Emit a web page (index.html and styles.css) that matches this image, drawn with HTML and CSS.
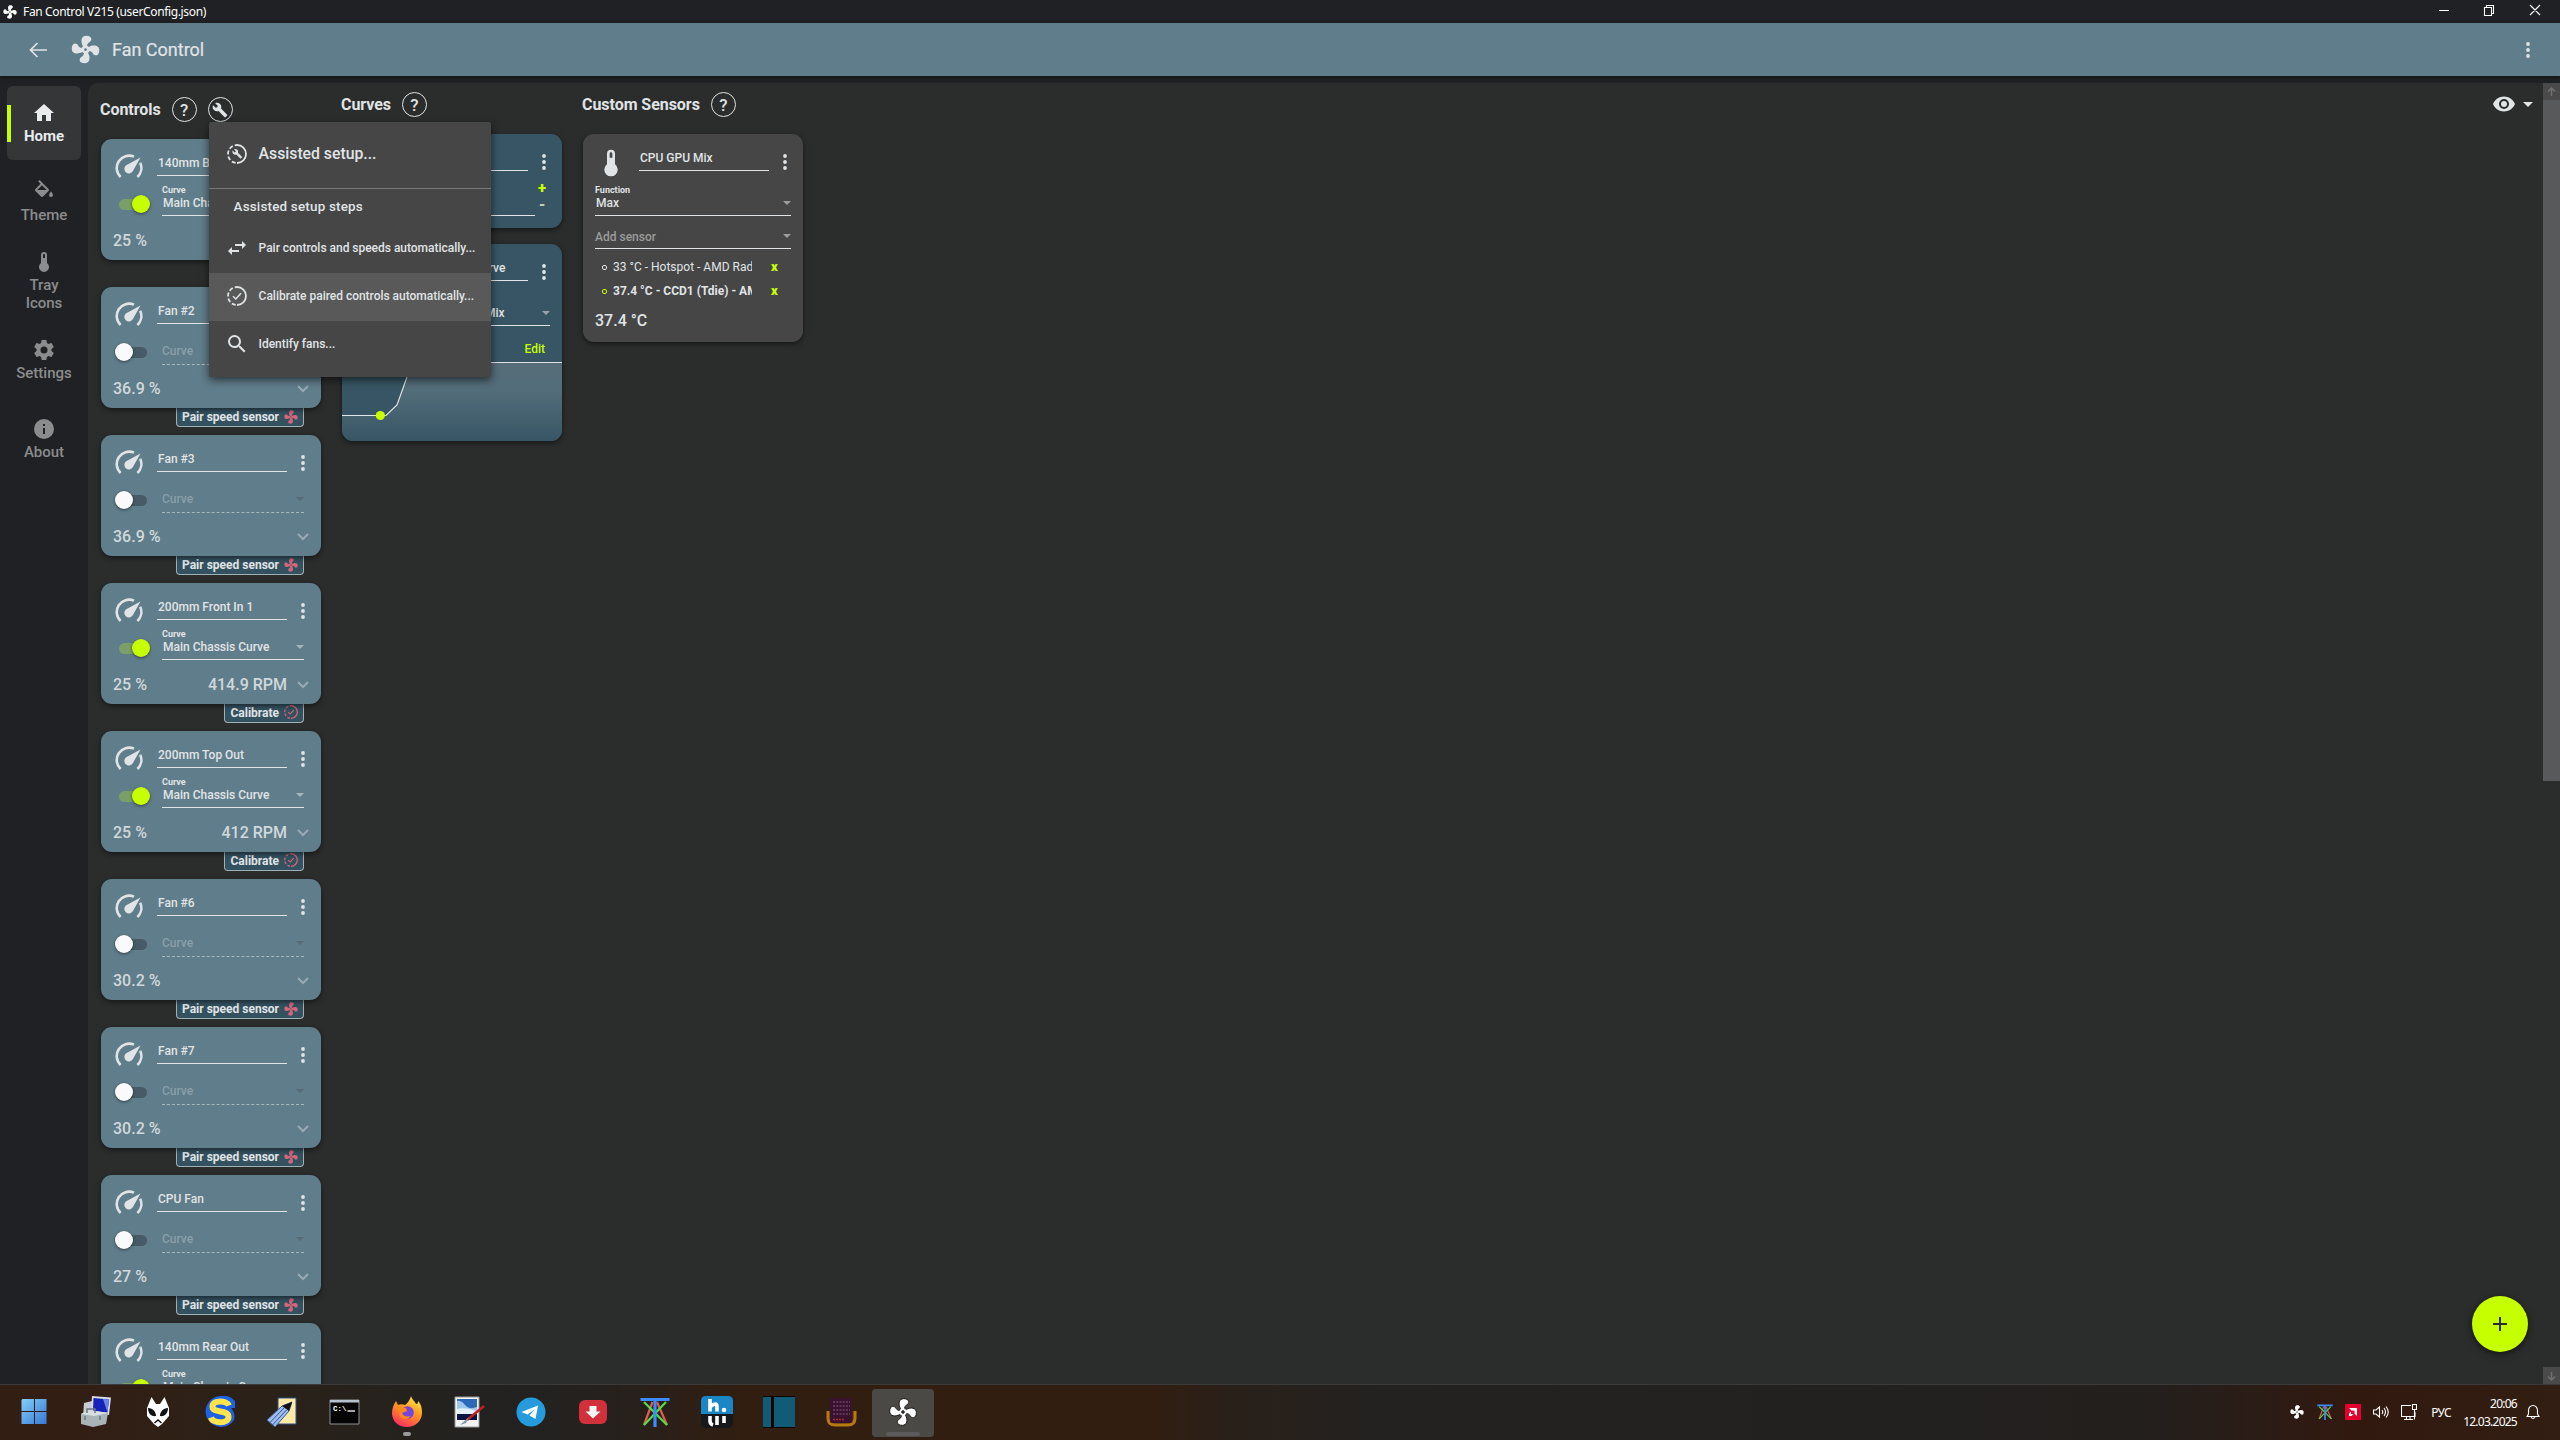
FILE: index.html
```
<!DOCTYPE html>
<html lang="en">
<head>
	<meta charset="UTF-8">
	<title>Fan Control V215 (userConfig.json)</title>
	<link rel="stylesheet" href="styles.css">
	<script src="cards.js"></script>
</head>
<body>
	<svg class="defs">
		<symbol id="fan" viewBox="0 0 24 24"><path d="M12,11A1,1 0 0,0 11,12A1,1 0 0,0 12,13A1,1 0 0,0 13,12A1,1 0 0,0 12,11M12.5,2C17,2 17.11,5.57 14.75,6.75C13.76,7.24 13.32,8.29 13.13,9.22C13.61,9.42 14.03,9.73 14.35,10.13C18.05,8.13 22.03,8.92 22.03,12.5C22.03,17 18.46,17.1 17.28,14.73C16.78,13.74 15.72,13.3 14.79,13.11C14.59,13.59 14.28,14 13.88,14.34C15.87,18.03 15.08,22 11.5,22C7,22 6.91,18.42 9.27,17.24C10.25,16.75 10.69,15.71 10.89,14.79C10.4,14.59 9.97,14.27 9.65,13.87C5.96,15.85 2,15.07 2,11.5C2,7 5.56,6.89 6.74,9.26C7.24,10.25 8.29,10.68 9.22,10.87C9.41,10.39 9.73,9.97 10.14,9.65C8.15,5.96 8.94,2 12.5,2Z"/></symbol>
		<symbol id="home" viewBox="0 0 24 24"><path d="M10,20V14H14V20H19V12H22L12,3L2,12H5V20H10Z"/></symbol>
		<symbol id="fill" viewBox="0 0 24 24"><path d="M19,11.5C19,11.5 17,13.67 17,15A2,2 0 0,0 19,17A2,2 0 0,0 21,15C21,13.67 19,11.5 19,11.5M5.21,10L10,5.21L14.79,10M16.56,8.94L7.62,0L6.21,1.41L8.59,3.79L3.44,8.94C2.85,9.5 2.85,10.47 3.44,11.06L8.94,16.56C9.23,16.85 9.62,17 10,17C10.38,17 10.77,16.85 11.06,16.56L16.56,11.06C17.15,10.47 17.15,9.5 16.56,8.94Z"/></symbol>
		<symbol id="thermo" viewBox="0 0 24 24"><path d="M15 13V5A3 3 0 0 0 9 5V13A5 5 0 1 0 15 13M12 4A1 1 0 0 1 13 5V8H11V5A1 1 0 0 1 12 4Z"/></symbol>
		<symbol id="cog" viewBox="0 0 24 24"><path d="M12,15.5A3.5,3.5 0 0,1 8.5,12A3.5,3.5 0 0,1 12,8.5A3.5,3.5 0 0,1 15.5,12A3.5,3.5 0 0,1 12,15.5M19.43,12.97C19.47,12.65 19.5,12.33 19.5,12C19.5,11.67 19.47,11.34 19.43,11L21.54,9.37C21.73,9.22 21.78,8.95 21.66,8.73L19.66,5.27C19.54,5.05 19.27,4.96 19.05,5.05L16.56,6.05C16.04,5.66 15.5,5.32 14.87,5.07L14.5,2.42C14.46,2.18 14.25,2 14,2H10C9.75,2 9.54,2.18 9.5,2.42L9.13,5.07C8.5,5.32 7.96,5.66 7.44,6.05L4.95,5.05C4.73,4.96 4.46,5.05 4.34,5.27L2.34,8.73C2.21,8.95 2.27,9.22 2.46,9.37L4.57,11C4.53,11.34 4.5,11.67 4.5,12C4.5,12.33 4.53,12.65 4.57,12.97L2.46,14.63C2.27,14.78 2.21,15.05 2.34,15.27L4.34,18.73C4.46,18.95 4.73,19.03 4.95,18.95L7.44,17.94C7.96,18.34 8.5,18.68 9.13,18.93L9.5,21.58C9.54,21.82 9.75,22 10,22H14C14.25,22 14.46,21.82 14.5,21.58L14.87,18.93C15.5,18.67 16.04,18.34 16.56,17.94L19.05,18.95C19.27,19.03 19.54,18.95 19.66,18.73L21.66,15.27C21.78,15.05 21.73,14.78 21.54,14.63L19.43,12.97Z"/></symbol>
		<symbol id="info" viewBox="0 0 24 24"><path d="M13,9H11V7H13M13,17H11V11H13M12,2A10,10 0 0,0 2,12A10,10 0 0,0 12,22A10,10 0 0,0 22,12A10,10 0 0,0 12,2Z"/></symbol>
		<symbol id="wrench" viewBox="0 0 24 24"><path d="M22.7,19L13.6,9.9C14.5,7.6 14,4.9 12.1,3C10.1,1 7.1,0.6 4.7,1.7L9,6L6,9L1.6,4.7C0.4,7.1 0.9,10.1 2.9,12.1C4.8,14 7.5,14.5 9.8,13.6L18.9,22.7C19.3,23.1 19.9,23.1 20.3,22.7L22.6,20.4C23.1,20 23.1,19.3 22.7,19Z"/></symbol>
		<symbol id="search" viewBox="0 0 24 24"><path d="M9.5,3A6.5,6.5 0 0,1 16,9.5C16,11.11 15.41,12.59 14.44,13.73L14.71,14H15.5L20.5,19L19,20.5L14,15.5V14.71L13.73,14.44C12.59,15.41 11.11,16 9.5,16A6.5,6.5 0 0,1 3,9.5A6.5,6.5 0 0,1 9.5,3M9.5,5C7,5 5,7 5,9.5C5,12 7,14 9.5,14C12,14 14,12 14,9.5C14,7 12,5 9.5,5Z"/></symbol>
		<symbol id="swap" viewBox="0 0 24 24"><path d="M21,9L17,5V8H10V10H17V13M7,11L3,15L7,19V16H14V14H7V11Z"/></symbol>
		<symbol id="eye" viewBox="0 0 24 24"><path d="M12,9A3,3 0 0,0 9,12A3,3 0 0,0 12,15A3,3 0 0,0 15,12A3,3 0 0,0 12,9M12,17A5,5 0 0,1 7,12A5,5 0 0,1 12,7A5,5 0 0,1 17,12A5,5 0 0,1 12,17M12,4.5C7,4.5 2.73,7.61 1,12C2.73,16.39 7,19.5 12,19.5C17,19.5 21.27,16.39 23,12C21.27,7.61 17,4.5 12,4.5Z"/></symbol>
		<symbol id="dots" viewBox="0 0 6 16"><circle cx="3" cy="2" r="1.9"/><circle cx="3" cy="8" r="1.9"/><circle cx="3" cy="14" r="1.9"/></symbol>
		<symbol id="arrow" viewBox="0 0 8 4"><path d="M0 0H8L4 4Z"/></symbol>
		<symbol id="chevron" viewBox="0 0 12 8"><path d="M1 1L6 6L11 1" fill="none" stroke="currentColor" stroke-width="2"/></symbol>
		<symbol id="gauge" viewBox="0 0 28 24"><path d="M5.6 23A12.4 12.4 0 0 1 19 2.600M25.2 8.800A12.4 12.4 0 0 1 22.4 23" fill="none" stroke="currentColor" stroke-width="2.6"/><path d="M25.500 3.500L18.200 16.600A4.600 4.600 0 1 1 11.200 11.200Z"/></symbol>
		<symbol id="ring" viewBox="0 0 20 20"><path d="M10 1A9 9 0 0 1 10 19" fill="none" stroke="currentColor" stroke-width="1.8"/><path d="M10 19A9 9 0 0 1 10 1" fill="none" stroke="currentColor" stroke-width="1.8" stroke-dasharray="4 2.1" stroke-dashoffset="-1.4"/></symbol>
		<symbol id="calib" viewBox="0 0 20 20"><use href="#ring"/><path d="M6 10.2L8.8 13L14 7.2" fill="none" stroke="currentColor" stroke-width="1.5"/></symbol>
		<symbol id="assist" viewBox="0 0 20 20"><use href="#ring"/><use href="#wrench" x="5" y="4.5" width="10.5" height="10.5"/></symbol>
		<symbol id="tripod" viewBox="0 0 30 30"><g fill="none" stroke-width="2.2"><path d="M12.5 5L4 28M17 5L27 28" stroke="#e8594f"/><path d="M4 5L27 28M26 5L4 28" stroke="#4fe04a"/><path d="M15 4V30M0.5 2.5H29.5" stroke="#3a8cff" stroke-width="3.2"/></g></symbol>
	</svg>

	<div class="titlebar">
		<svg class="app-ico"><use href="#fan"/></svg>
		<span>Fan Control V215 (userConfig.json)</span>
		<svg class="win-btns" viewBox="0 0 104 12"><path d="M1 6.5H11M46.500 3.500H53.500V11.500H46.500ZM48.500 3V1.500H55.500V9.500H54M92 1L102 11M102 1L92 11" fill="none" stroke="#fff" stroke-width="1.100"/></svg>
	</div>

	<header class="header">
		<svg class="back" viewBox="0 0 18 16"><path d="M18 8H1.500M8.500 1L1.500 8L8.500 15" fill="none" stroke="currentColor" stroke-width="1.700"/></svg>
		<svg class="logo"><use href="#fan"/></svg>
		<h1>Fan Control</h1>
		<svg class="dots"><use href="#dots"/></svg>
	</header>

	<div class="wrap">
		<nav class="side">
			<a class="on"><svg><use href="#home"/></svg>Home</a>
			<a><svg><use href="#fill"/></svg>Theme</a>
			<a><svg><use href="#thermo"/></svg>Tray<br>Icons</a>
			<a><svg><use href="#cog"/></svg>Settings</a>
			<a><svg><use href="#info"/></svg>About</a>
		</nav>

		<main class="main">
			<section class="col">
				<div class="col-head first">
					<h2>Controls</h2>
					<span class="round">?</span>
					<span class="round tool"><svg><use href="#wrench"/></svg>
						<div class="menu">
							<div class="item big"><svg><use href="#assist"/></svg>Assisted setup...</div>
							<div class="caption">Assisted setup steps</div>
							<div class="item"><svg class="wide"><use href="#swap"/></svg>Pair controls and speeds automatically...</div>
							<div class="item hover"><svg><use href="#calib"/></svg>Calibrate paired controls automatically...</div>
							<div class="item"><svg class="wide"><use href="#search"/></svg>Identify fans...</div>
						</div>
					</span>
				</div>
				<div id="controls"></div>
			</section>

			<section class="col">
				<div class="col-head">
					<h2>Curves</h2>
					<span class="round">?</span>
				</div>
				<div class="card curve flat">
					<div class="row1">
						<div class="name"></div>
						<svg class="dots"><use href="#dots"/></svg>
					</div>
					<div class="step">
						<div class="line"></div>
						<div class="pm"><b>+</b><i>-</i></div>
					</div>
				</div>
				<div class="card curve graph">
					<div class="row1">
						<div class="name">Main Chassis Curve</div>
						<svg class="dots"><use href="#dots"/></svg>
					</div>
					<div class="field source"><span>CPU GPU Mix</span><svg class="arr"><use href="#arrow"/></svg></div>
					<div class="edit">Edit</div>
					<svg class="plot" viewBox="0 0 220 80">
						<defs><linearGradient id="g" x1="0" y1="0" x2="0" y2="1"><stop offset="0" stop-color="#566d79"/><stop offset=".35" stop-color="#536d7a"/><stop offset="1" stop-color="#375565"/></linearGradient></defs>
						<path d="M0 54.500H44L55 44L65 16L70 2H220V80H0Z" fill="url(#g)"/>
						<path d="M0 54.500H44L55 44L65 16L70 1.500H220" fill="none" stroke="#dfe4e6" stroke-width="1.200"/>
						<circle cx="38.300" cy="54.500" r="4.600" fill="#c6ff00"/>
					</svg>
				</div>
			</section>

			<section class="col">
				<div class="col-head">
					<h2>Custom Sensors</h2>
					<span class="round">?</span>
				</div>
				<div class="card sensor">
					<div class="row1">
						<svg class="thermo"><use href="#thermo"/></svg>
						<div class="name">CPU GPU Mix</div>
						<svg class="dots"><use href="#dots"/></svg>
					</div>
					<div class="field"><small>Function</small><span>Max</span><svg class="arr"><use href="#arrow"/></svg></div>
					<div class="field add"><span>Add sensor</span><svg class="arr"><use href="#arrow"/></svg></div>
					<ul class="mix">
						<li><i></i><span>33 °C - Hotspot - AMD Rad</span><b>x</b></li>
						<li class="on"><i></i><span>37.4 °C - CCD1 (Tdie) - AM</span><b>x</b></li>
					</ul>
					<div class="val">37.4 °C</div>
				</div>
			</section>

			<div class="view"><svg class="eye"><use href="#eye"/></svg><svg class="arr"><use href="#arrow"/></svg></div>
			<div class="fab"></div>
		</main>

		<div class="scroll">
			<svg viewBox="0 0 17 17"><path d="M8.500 13V5M5 8.500L8.500 5L12 8.500" /></svg>
			<div class="thumb"></div>
			<svg viewBox="0 0 17 17"><path d="M8.500 5V13M5 9.500L8.500 13L12 9.500"/></svg>
		</div>
	</div>

	<footer class="taskbar">
		<div class="apps">
			<span><svg viewBox="0 0 32 32"><defs><linearGradient id="w" x1="0" y1="0" x2="1" y2="1"><stop offset="0" stop-color="#85cdfa"/><stop offset="1" stop-color="#3579d4"/></linearGradient></defs><path d="M4.500 3H16V15H3.500V4ZM17 3H28.500V15H17ZM3.500 16H16V28H3.500ZM17 16H28.500V28H17Z" fill="url(#w)"/></svg></span>
			<span><svg viewBox="0 0 32 32"><path d="M4 7L12 5V20H3Z" fill="#c9cbd0"/><path d="M12 0L31 1.500L29 19L11 17Z" fill="#d9dce4"/><path d="M13.500 2L29 3.500L27.500 16.500L13 15Z" fill="#1523b8"/><path d="M23 3L29 3.500L27.500 16.500Z" fill="#6a83e8"/><path d="M1 18L9 14L28 17L26 28L13 31L1 28Z" fill="#a9b4b9"/><path d="M1 18L9 14L28 17L14 20Z" fill="#d7dfe2"/><path d="M7 17V13H15V17M5 20V24M20 20V24" fill="none" stroke="#6e7a80" stroke-width="1.500"/></svg></span>
			<span><svg viewBox="0 0 32 32"><path d="M9.500 1L14 8H18L22.500 1L27 12V20L20 28L16 31L12 28L5 20V12Z" fill="#fff"/><path d="M6 12C11 12 14 16 14 20C9 21 6 17 6 12ZM26 12C21 12 18 16 18 20C23 21 26 17 26 12Z" fill="#111"/><path d="M12.500 27L16 24L19.500 27" fill="none" stroke="#111" stroke-width="1.500"/></svg></span>
			<span><svg viewBox="0 0 32 32"><path d="M16 0A16 16 0 0 1 31 5V12H27A13 13 0 0 1 30 24A15.500 15.500 0 1 1 16 0Z" fill="#1d63e8"/><path d="M25 9.500C23 4.500 8.500 3.500 8.500 10.500C8.500 18 24.500 13 24.500 21C24.500 28 9 28 7 21.500" fill="none" stroke="#ffe34d" stroke-width="6"/></svg></span>
			<span><svg viewBox="0 0 32 32"><path d="M12 2H30V28H12Z" fill="#fdeaa6" stroke="#2f4f86"/><path d="M26 6L23 15L9 31L1 24L16 10Z" fill="#9dbdf0" stroke="#3b5b96"/><path d="M26 6L23 15L16 10Z" fill="#111"/><path d="M18 12L4 26.500M20.500 14L6.500 29" stroke="#33559a"/></svg></span>
			<span><svg viewBox="0 0 32 32"><path d="M2 4H31V28H2Z" fill="#050505" stroke="#8d9199"/><path d="M2 4H31V6.500H2Z" fill="#b7c0cf"/><path d="M19.500 15H27" stroke="#fff" stroke-width="1.300"/><text x="5" y="15" font-size="7.500" fill="#fff" font-family="Liberation Mono, monospace" font-weight="bold">C:\</text></svg></span>
			<span><svg viewBox="0 0 32 32"><defs><linearGradient id="ff" x1=".8" y1="0" x2=".3" y2="1"><stop offset="0" stop-color="#fff04a"/><stop offset=".45" stop-color="#ff9a1e"/><stop offset="1" stop-color="#ff2d62"/></linearGradient></defs><path d="M20 0C21 4 24 5 25 8C27 8 27 6 27 5C31 9 31 14 31 17C31 25 24 31 16 31C7 31 1 25 1 17C1 12 3 8 5 5L7 9C9 8 12 8 14 9C16 8 19 4 20 0Z" fill="url(#ff)"/><circle cx="16.500" cy="16.500" r="6.300" fill="#7546e0"/><path d="M6 10L15 12L16 15L11 17Q13 22 20 20Q15 26 9 21Z" fill="#ff8a1a"/></svg><em></em></span>
			<span><svg viewBox="0 0 32 32"><path d="M2 1H26V31H2Z" fill="#f3f3f3" stroke="#999"/><path d="M4 3H24V24H4Z" fill="#2e69b8"/><path d="M4 5Q8 4 12 9T24 11V17L4 18Z" fill="#9cc6ec"/><path d="M4 13Q12 11 24 15V19H4Z" fill="#e6f2fa"/><path d="M4 18H24V24H4Z" fill="#0c1644"/><path d="M31 10L14 24" stroke="#c41f27" stroke-width="2.500"/><path d="M16 21L7 29L13 27Z" fill="#7c99ab"/></svg></span>
			<span><svg viewBox="0 0 32 32"><circle cx="16" cy="16" r="14.500" fill="#259bdd"/><path d="M6.500 16L23 9.500L20.500 23L14.500 19.500L19.500 13.500L12.500 18.500Z" fill="#fff"/></svg></span>
			<span><svg viewBox="0 0 32 32"><rect x="2" y="4" width="28" height="24" rx="6" fill="#d2303a"/><path d="M12.500 10H19.500V15.500H23.500L16 22.500L8.500 15.500H12.500Z" fill="#f4f4f4"/></svg></span>
			<span><svg viewBox="0 0 32 32"><use href="#tripod" x="1" y="1" width="30" height="30"/></svg></span>
			<span><svg viewBox="0 0 32 32"><rect width="32" height="32" rx="5" fill="#17181b"/><path d="M0 18V5Q0 0 5 0H27Q32 0 32 5V18Z" fill="#1a87c4"/><path d="M9 3V15.500M9 11Q16 5 16 11V15.500M9 20V25Q9 28 12 29M16 20V29M23 20V27" fill="none" stroke="#fff" stroke-width="3.600"/><circle cx="23" cy="14" r="2.300" fill="#fff"/></svg></span>
			<span><svg viewBox="0 0 32 32"><path d="M0 0H32V32H0Z" fill="#050505"/><path d="M0 1H8V31H0ZM11 1H32V31H11Z" fill="#115b75"/></svg></span>
			<span><svg viewBox="0 0 32 32"><path d="M3 15V22Q3 29 10 29H23Q30 29 30 22V15" fill="#4a2a10" stroke="#b67a10" stroke-width="3"/><rect x="5" y="2" width="22" height="25" rx="2" fill="#3a1230"/><path d="M8 6H25M8 10H25M8 14H25M8 18H25" stroke="#6a4668" stroke-width="1.300" stroke-dasharray="2 1.200"/><path d="M8 23.500H19" stroke="#a3302c" stroke-width="1.500" stroke-dasharray="2 1"/></svg></span>
			<span class="active"><svg viewBox="0 0 32 32"><use href="#fan" fill="#fff" stroke="#111" stroke-width=".7" width="32" height="32"/></svg></span>
		</div>
		<div class="tray">
			<svg class="t-fan"><use href="#fan"/></svg>
			<svg viewBox="0 0 30 30"><use href="#tripod"/></svg>
			<svg viewBox="0 0 16 16"><path d="M0 0H16V16H0Z" fill="#e4002f"/><path d="M4 4H12V12L9.500 9.500V6.500H6.500Z" fill="#fff"/><path d="M6 7.500L4 9.500V12H6.500L8.500 10H6Z" fill="#fff"/></svg>
			<svg viewBox="0 0 16 16" class="ln"><path d="M0.500 6V10H3L6.500 13V3L3 6ZM9 6Q10.500 8 9 10M11 4Q14 8 11 12M13 2.500Q17.500 8 13 13.500"/></svg>
			<svg viewBox="0 0 16 16" class="ln"><path d="M10 1.500H0.500V12.500H14V8M3 15.500H12M5.500 13V15M9 13V15M11.500 0.500H15.500V5.500H11.500ZM13.500 6V15.500"/></svg>
			<span class="lang">РУС</span>
			<span class="clock">20:06<br>12.03.2025</span>
			<svg viewBox="0 0 16 16" class="ln"><path d="M2 12.500L3.500 10V6.500A4.500 5 0 0 1 12.500 6.500V10L14 12.500ZM6 13Q8 16 10 13"/></svg>
		</div>
	</footer>
</body>
</html>
```
FILE: cards.js
```
var arr=[
	{name:'140mm Bottom In',on:true,pct:'25 %',rpm:''},
	{name:'Fan #2',pct:'36.9 %',tab:'pair'},
	{name:'Fan #3',pct:'36.9 %',tab:'pair'},
	{name:'200mm Front In 1',on:true,pct:'25 %',rpm:'414.9 RPM',tab:'cal'},
	{name:'200mm Top Out',on:true,pct:'25 %',rpm:'412 RPM',tab:'cal'},
	{name:'Fan #6',pct:'30.2 %',tab:'pair'},
	{name:'Fan #7',pct:'30.2 %',tab:'pair'},
	{name:'CPU Fan',pct:'27 %',tab:'pair'},
	{name:'140mm Rear Out',on:true,pct:'25 %',rpm:''}
];
function use(id,cls){
	return '<svg class="'+cls+'"><use href="#'+id+'"/></svg>';
}
window.onload=function(){
	var oBox=document.querySelector('#controls');
	for (var i = 0; i < arr.length; i++) {
		var c=arr[i];
		var oDiv=document.createElement('div');
		oDiv.className='slot';
		var html='<div class="card fan">'+
			'<div class="row1">'+use('gauge','gauge')+'<div class="name">'+c.name+'</div>'+use('dots','dots')+'</div>'+
			'<div class="row2"><div class="toggle'+(c.on?' on':'')+'"></div>';
		if (c.on) {
			html+='<div class="field"><small>Curve</small><span>Main Chassis Curve</span>'+use('arrow','arr')+'</div>';
		}else{
			html+='<div class="field off"><span>Curve</span>'+use('arrow','arr')+'</div>';
		}
		html+='</div><div class="row3"><span>'+c.pct+'</span><span class="rpm">'+(c.rpm||'')+'</span>'+use('chevron','chev')+'</div></div>';
		if (c.tab=='pair') {
			html+='<div class="tab">Pair speed sensor'+use('fan','')+'</div>';
		}
		if (c.tab=='cal') {
			html+='<div class="tab">Calibrate'+use('calib','cal')+'</div>';
		}
		oDiv.innerHTML=html;
		oBox.appendChild(oDiv);
	}
};
```
FILE: styles.css
```
*{
	margin: 0;
	padding: 0;
	list-style: none;
	box-sizing: border-box;
}
body,html{
	width: 100%;
	height: 100%;
	overflow: hidden;
}
body{
	display: flex;
	flex-direction: column;
	background: #202124;
	color: #e0e4e6;
	font: 500 12px Roboto, sans-serif;
}
svg{
	display: block;
	flex: none;
	fill: currentColor;
}
.defs{
	position: absolute;
	width: 0;
	height: 0;
}
.titlebar{
	height: 23px;
	display: flex;
	align-items: center;
	font: 12px "Noto Sans", sans-serif;
	letter-spacing: -.35px;
	color: #fff;
	padding-left: 2px;
}
.app-ico{
	width: 16px;
	height: 16px;
	margin-right: 5px;
}
.win-btns{
	width: 104px;
	height: 12px;
	margin: 0 18px 3px auto;
}
.header{
	height: 53px;
	flex: none;
	display: flex;
	align-items: center;
	background: #607d8b;
	padding-left: 29px;
	box-shadow: 0 1px 4px rgba(0,0,0,.5);
	position: relative;
}
.back{
	width: 18px;
	height: 16px;
}
.logo{
	width: 33px;
	height: 33px;
	margin-left: 22px;
}
.header h1{
	font-size: 18px;
	font-weight: 400;
	margin-left: 10px;
	-webkit-text-stroke: .2px;
}
.dots{
	width: 6px;
	height: 16px;
}
.header .dots{
	margin: 0 29px 0 auto;
}
.wrap{
	height: 1308px;
	flex: none;
	display: flex;
	padding-top: 7px;
}
.side{
	width: 88px;
	padding: 3px 7px;
	display: flex;
	flex-direction: column;
	gap: 5px;
}
.side a{
	height: 74px;
	display: flex;
	flex-direction: column;
	align-items: center;
	justify-content: center;
	text-align: center;
	font-size: 15px;
	line-height: 18px;
	color: #8b8c8d;
	border-radius: 6px;
}
.side svg{
	width: 24px;
	height: 24px;
	margin-bottom: 2px;
}
.side .on{
	background: #353638;
	color: #e9ecee;
	font-weight: 700;
	position: relative;
}
.side .on:before{
	content: '';
	position: absolute;
	left: 0;
	top: 19px;
	width: 4px;
	height: 37px;
	background: #c6ff00;
}
.main{
	flex: 1;
	display: flex;
	gap: 21px;
	align-items: flex-start;
	height: 1301px;
	padding-left: 13px;
	background: #2b2d2c;
	border-top-left-radius: 10px;
	overflow: hidden;
	position: relative;
}
.col{
	width: 220px;
	flex: none;
}
.col-head{
	height: 51px;
	display: flex;
	align-items: center;
	padding-bottom: 8px;
	margin-left: -1px;
}
.col-head.first{
	height: 56px;
	padding-bottom: 3px;
}
.col-head h2{
	font-size: 16px;
	font-weight: 700;
	letter-spacing: -.05px;
	white-space: nowrap;
}
.round{
	width: 25px;
	height: 25px;
	flex: none;
	display: flex;
	align-items: center;
	justify-content: center;
	border: 1px solid #e0e4e6;
	border-radius: 50%;
	margin-left: 11px;
	font-size: 17px;
	position: relative;
}
.round.tool{
	z-index: 5;
}
.round svg{
	width: 16px;
	height: 16px;
}
.menu{
	position: absolute;
	left: 0;
	top: 24px;
	width: 282px;
	height: 255px;
	background: #464646;
	border-radius: 2px;
	box-shadow: 0 3px 8px rgba(0,0,0,.6);
	font-size: 12px;
}
.menu .item{
	height: 48px;
	display: flex;
	align-items: center;
	padding: 0 0 2px 18px;
	white-space: nowrap;
	letter-spacing: -.02px;
}
.menu .item svg{
	width: 20px;
	height: 20px;
	margin-right: 12px;
}
.menu .item .wide{
	width: 24px;
	height: 24px;
	margin: 0 10px 0 -2px;
}
.menu .big{
	height: 67px;
	font-size: 15.8px;
	border-bottom: 1px solid #777;
	padding-bottom: 3px;
}
.menu .caption{
	height: 36px;
	line-height: 35px;
	padding-left: 25px;
	font-size: 13.4px;
	letter-spacing: .2px;
}
.menu .hover{
	background: #595959;
}
.slot{
	height: 148px;
}
.card{
	width: 220px;
	border-radius: 11px;
	box-shadow: 0 2px 5px rgba(0,0,0,.5);
	overflow: hidden;
	position: relative;
}
.fan{
	height: 121px;
	background: #607d8b;
	z-index: 1;
}
.row1{
	height: 37px;
	display: flex;
}
.gauge{
	width: 28px;
	height: 24px;
	margin: 15px 14px 0 14px;
}
.name{
	width: 130px;
	height: 37px;
	padding: 16px 0 0 1px;
	line-height: 16px;
	border-bottom: 1px solid #e0e4e6;
	white-space: nowrap;
}
.row1 .dots{
	margin: 20px 0 0 13px;
}
.row2{
	height: 41px;
	display: flex;
}
.toggle{
	width: 36px;
	height: 18px;
	margin: 19px 11px 0 14px;
	position: relative;
}
.toggle:before,.toggle:after{
	content: '';
	position: absolute;
	left: 4px;
	top: 4px;
	width: 28px;
	height: 11px;
	border-radius: 6px;
	background: #465b65;
}
.toggle:after{
	left: 0;
	top: 0;
	width: 18px;
	height: 18px;
	border-radius: 50%;
	background: #fafafa;
	box-shadow: 0 1px 3px rgba(0,0,0,.5);
}
.toggle.on:before{
	background: #7b9f6b;
}
.toggle.on:after{
	left: 17px;
	background: #c6ff00;
}
.field{
	width: 142px;
	height: 40px;
	padding-top: 9px;
	border-bottom: 1px solid #e0e4e6;
	position: relative;
}
.field small{
	display: block;
	font-size: 9px;
	line-height: 10px;
	font-weight: 700;
	height: 11px;
}
.field span{
	display: block;
	line-height: 14px;
	padding: 0 0 0 1px;
	white-space: nowrap;
}
.field .arr{
	position: absolute;
	right: 0;
	top: 25px;
}
.arr{
	width: 8px;
	height: 4px;
	opacity: .55;
}
.field.off{
	height: 41px;
	padding-top: 20px;
	border-bottom: 1px dashed #a8b6bd;
	color: #8a9fa9;
}
.field.off span{
	padding-left: 0;
}
.off .arr{
	color: #4b5d66;
}
.row3{
	height: 43px;
	display: flex;
	padding: 14px 12px 0;
	font-size: 16px;
	line-height: 20px;
	color: #d0d8dc;
}
.rpm{
	margin-left: auto;
	padding-right: 10px;
}
.chev{
	width: 12px;
	height: 8px;
	margin-top: 6px;
	opacity: .5;
}
.tab{
	width: fit-content;
	height: 20px;
	margin: -1px 17px 0 auto;
	display: flex;
	align-items: center;
	background: #345160;
	border: 1px solid #9fb0b8;
	border-top: none;
	border-radius: 0 0 4px 4px;
	padding: 0 4px 0 5px;
	font-weight: 700;
}
.tab svg{
	width: 16px;
	height: 16px;
	margin-left: 4px;
	color: #d4667a;
}
.tab .cal{
	width: 14px;
	height: 14px;
	margin: 0 1px 2px 5px;
}
.curve{
	background: #375565;
	padding-left: 14px;
}
.curve .name{
	margin-left: 42px;
}
.flat{
	height: 94px;
	margin-bottom: 16px;
}
.step{
	display: flex;
}
.step .line{
	width: 179px;
	height: 45px;
	border-bottom: 1px solid #e0e4e6;
}
.pm{
	width: 14px;
	padding-top: 9px;
	text-align: center;
	line-height: 17px;
}
.pm b,.pm i{
	display: block;
	font-style: normal;
	font-size: 15px;
	font-weight: 900;
	color: #c6ff00;
}
.pm i{
	color: #c8d0b0;
}
.graph{
	height: 197px;
	padding-left: 0;
}
.graph .name{
	margin-left: 56px;
}
.graph .field{
	width: 196px;
	height: 45px;
	margin-left: 12px;
	padding-top: 25px;
}
.graph .source span{
	padding-left: 78px;
}
.graph .arr,.sensor .arr{
	top: 30px;
}
.edit{
	height: 36px;
	padding: 15px 17px 0 0;
	line-height: 16px;
	text-align: right;
	color: #c6ff00;
}
.plot{
	width: 220px;
	height: 80px;
	margin-top: -1px;
}
.sensor{
	height: 208px;
	background: #464646;
}
.thermo{
	width: 32px;
	height: 32px;
	margin: 13px 12px 0 12px;
}
.sensor .field{
	width: 196px;
	height: 45px;
	margin-left: 12px;
	padding-top: 14px;
}
.sensor .add{
	height: 33px;
	padding-top: 14px;
	color: #9b9c9c;
}
.sensor .add span{
	padding: 0;
}
.sensor .add .arr{
	top: 18px;
	color: #e0e4e6;
}
.mix{
	padding: 6px 0 0 19px;
}
.mix li{
	height: 24px;
	display: flex;
	align-items: center;
}
.mix i{
	width: 5px;
	height: 5px;
	border: 1px solid #e0e4e6;
	border-radius: 2px;
}
.mix span{
	width: 139px;
	margin-left: 6px;
	overflow: hidden;
	white-space: nowrap;
	font-weight: 400;
}
.mix b{
	margin: 0 0 2px 19px;
	font-size: 13px;
	font-weight: 900;
	color: #c6ff00;
}
.mix .on i{
	border-color: #c6ff00;
}
.mix .on span{
	font-weight: 700;
}
.val{
	padding: 9px 0 0 12px;
	font-size: 16px;
	line-height: 18px;
}
.view{
	position: absolute;
	right: 10px;
	top: 9px;
	display: flex;
	align-items: center;
	gap: 7px;
}
.eye{
	width: 24px;
	height: 24px;
}
.view .arr{
	width: 10px;
	height: 5px;
	opacity: 1;
}
.fab{
	position: absolute;
	right: 15px;
	bottom: 32px;
	width: 56px;
	height: 56px;
	border-radius: 50%;
	background: #c6ff00;
	box-shadow: 0 2px 7px rgba(0,0,0,.6);
}
.fab:before,.fab:after{
	content: '';
	position: absolute;
	left: 21px;
	top: 27px;
	width: 14px;
	height: 2px;
	background: #2b2d2c;
}
.fab:after{
	transform: rotate(90deg);
}
.scroll{
	width: 17px;
	display: flex;
	flex-direction: column;
	background: #2b2d2c;
}
.scroll svg{
	width: 17px;
	height: 17px;
	background: #4a4a4b;
	fill: none;
	stroke: #707071;
	stroke-width: 1.5;
}
.thumb{
	height: 681px;
	margin-bottom: auto;
	background: #58595b;
}
.taskbar{
	height: 56px;
	flex: none;
	display: flex;
	align-items: center;
	border-top: 1px solid #3d3b3a;
	background: linear-gradient(90deg,#331e13 0%,#331e14 3%,#2c2117 9%,#232220 18%,#24211f 23%,#321e11 29%,#321e11 45%,#2a201a 48%,#232220 54%,#232120 75%,#231f1d 84%,#32190f 92%,#321e12 100%);
	position: relative;
	z-index: 6;
}
.apps{
	display: flex;
	padding-left: 3px;
}
.apps span{
	width: 62px;
	height: 48px;
	margin-right: .1px;
	display: flex;
	align-items: center;
	justify-content: center;
	position: relative;
}
.apps svg{
	width: 32px;
	height: 32px;
	margin-bottom: 1px;
}
.apps em{
	position: absolute;
	left: 27px;
	bottom: 1px;
	width: 8px;
	height: 4px;
	border-radius: 2px;
	background: #9a9a9a;
}
.apps .active{
	background: #4b4946;
	border-radius: 4px;
}
.active:after{
	content: '';
	position: absolute;
	left: 14px;
	bottom: 1px;
	width: 34px;
	height: 4px;
	border-radius: 2px;
	background: #5c5b5c;
}
.tray{
	display: flex;
	align-items: center;
	margin-left: auto;
	padding-right: 19px;
	gap: 12px;
	color: #fff;
	font: 12px "Noto Sans", sans-serif;
}
.tray svg{
	width: 16px;
	height: 16px;
	margin-bottom: 1px;
}
.tray .ln{
	fill: none;
	stroke: #fff;
	stroke-width: 1.1;
}
.lang{
	margin-left: 2px;
	letter-spacing: -.6px;
}
.clock{
	width: 54px;
	text-align: right;
	line-height: 18px;
	letter-spacing: -.75px;
	margin-right: -4px;
}
```
